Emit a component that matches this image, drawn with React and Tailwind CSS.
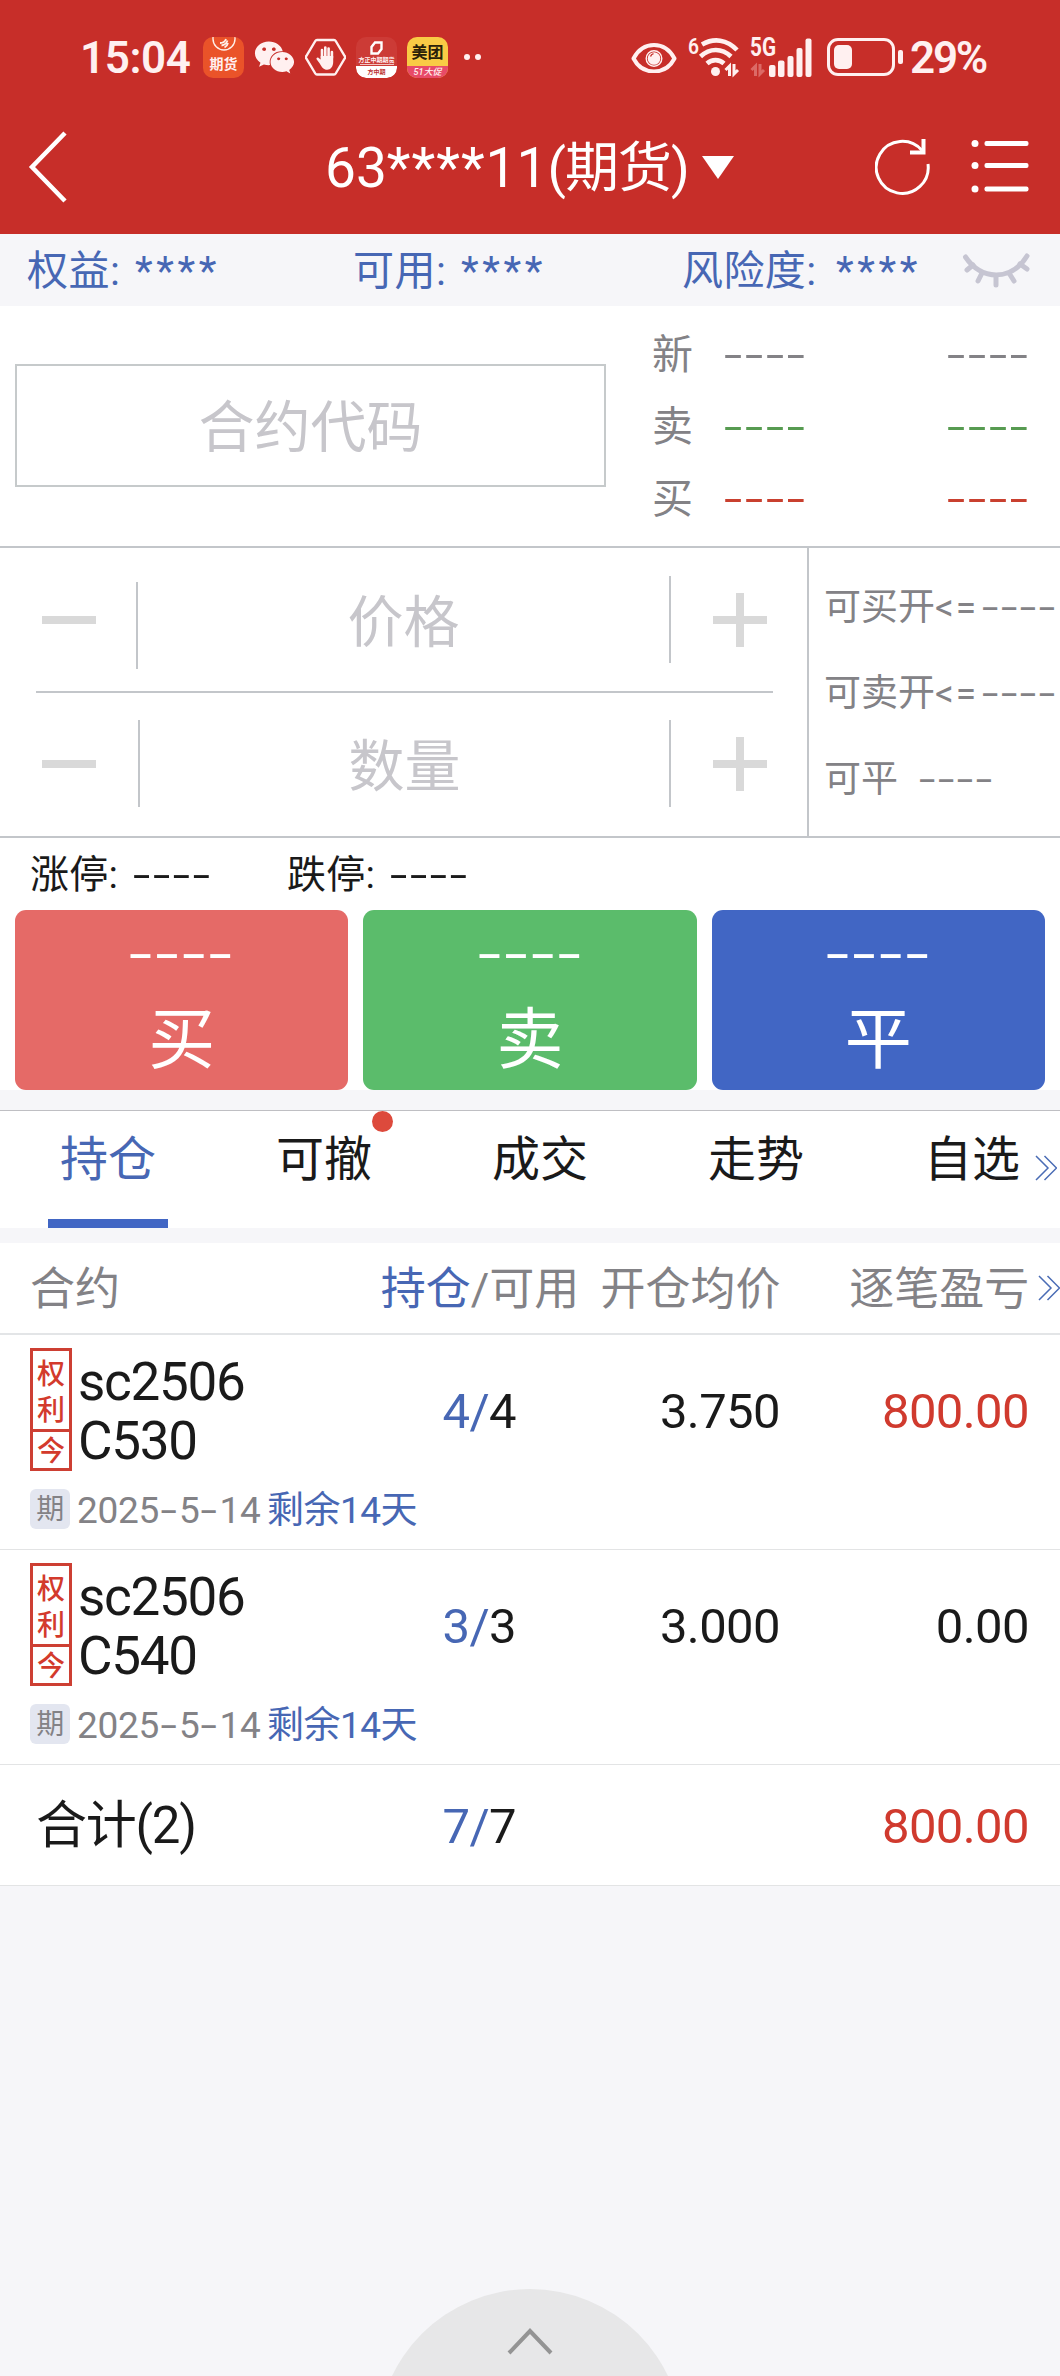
import { FaWeixin } from "react-icons/fa";

const TRADE_BUTTONS = [
  { label: "买", color: "bg-[#e56a67]" },
  { label: "卖", color: "bg-[#5bbc6b]" },
  { label: "平", color: "bg-[#4166c4]" },
];

const QUOTES = [
  { label: "新", color: "text-[#838286]" },
  { label: "卖", color: "text-[#579b51]" },
  { label: "买", color: "text-[#c9402f]" },
];

const TABS = [
  { label: "持仓", active: true },
  { label: "可撤", dot: true },
  { label: "成交" },
  { label: "走势" },
  { label: "自选" },
];

const POSITIONS = [
  { code: "sc2506", strike: "C530", held: 4, free: 4, price: "3.750", profit: "800.00", up: true },
  { code: "sc2506", strike: "C540", held: 3, free: 3, price: "3.000", profit: "0.00", up: false },
];

// Placeholder value, stretched so each hyphen is half an em wide
function Dashes({ className = "" }) {
  return (
    <span className={`inline-block w-[2.05em] ${className}`}>
      <span className="inline-block origin-left scale-x-[1.6] tracking-[0.043em]">----</span>
    </span>
  );
}

function Hyphen() {
  return (
    <span className="inline-block w-[20px]">
      <span className="inline-block origin-left scale-x-[1.6] pl-[1px]">-</span>
    </span>
  );
}

function DoubleChevron() {
  return (
    <svg width="22" height="26" viewBox="0 0 22 26" fill="none" stroke="#4a6cb5" strokeWidth="1.5">
      <path d="M1 1l12 12L1 25M9.500 1l12 12-12 12" />
    </svg>
  );
}

function PlusMark() {
  return (
    <svg width="54" height="54" viewBox="0 0 54 54" fill="#d9d9d9">
      <path d="M23 0h8v23h23v8H31v23h-8V31H0v-8h23z" />
    </svg>
  );
}

function StatusBar() {
  return (
    <div className="flex h-[114px] items-center pl-[80px] text-[#fff0f0]">
      <span className="w-[123px] pt-[2px] text-[44px] leading-none font-semibold tracking-[-0.400px]">15:04</span>

      <div className="flex items-center gap-[10px]">
        <div className="flex h-[41px] w-[41px] flex-col items-center overflow-hidden rounded-[10px] bg-[#ea5329]">
          <svg width="24" height="17" viewBox="0 0 24 17" fill="none" stroke="#fff0e8" strokeWidth="1.4">
            <path d="M1 0v2a11 11 0 0 0 22 0V0" />
            <path d="M8 6c3 0 5-1 6-4M9.500 8.500c3-.5 5-2 6-5M12.500 10.500c2-1 3-2.500 3.500-4.500" strokeWidth="1.800" />
          </svg>
          <span className="mt-[2px] text-[14px] leading-[16px] font-bold">期货</span>
        </div>
        <FaWeixin size={41} />
        <svg width="41" height="41" viewBox="0 0 41 41">
          <path
            d="M12 3h17a2 2 0 0 1 1.700 1l9 15a2 2 0 0 1 0 2.500l-9 15a2 2 0 0 1-1.700 1H12a2 2 0 0 1-1.700-1l-9-15a2 2 0 0 1 0-2.500l9-15A2 2 0 0 1 12 3z"
            fill="none"
            stroke="currentColor"
            strokeWidth="2.400"
          />
          <g stroke="currentColor" strokeWidth="2.600" strokeLinecap="round" fill="none">
            <path d="M17 21v-8M20.300 20v-9.500M23.600 20v-8.500M26.900 21v-6" />
          </g>
          <path
            d="M15.700 19h12.500v6c0 4.500-2.600 7.700-6 7.700-3.600 0-5.500-2.600-7.300-6l-3.300-4.500c-.6-1.300 1-2.200 2-1.200l2.100 1.600z"
            fill="currentColor"
          />
        </svg>
        <div className="flex h-[41px] w-[41px] flex-col items-center overflow-hidden rounded-[10px] bg-[#cc3b36] pt-[4px]">
          <svg width="13" height="14" viewBox="0 0 13 14" fill="none" stroke="#fff" strokeWidth="2.400">
            <path d="M5 1.500h6.500V8L8 12.500H1.500V6z" />
          </svg>
          <span className="mt-px text-[6px] leading-[8px] font-bold whitespace-nowrap">方正中期期货</span>
          <span className="mb-px h-px w-[34px] bg-[#f3c4c0]" />
          <span className="w-full flex-1 rounded-b-[10px] bg-white text-center text-[6px] leading-[11px] font-bold text-[#b33]">
            方中期
          </span>
        </div>
        <div className="flex h-[41px] w-[41px] flex-col items-center overflow-hidden rounded-[10px] bg-[#f9cb45]">
          <span className="h-[29px] text-[16px] leading-[32px] font-bold text-[#2a2108]">美团</span>
          <span className="w-full flex-1 bg-[#e84a68] text-center text-[9px] leading-[12px] font-medium italic">
            51大促
          </span>
        </div>
      </div>

      <div className="ml-[16px] flex gap-[5px]">
        <span className="h-[6px] w-[6px] rounded-full bg-current" />
        <span className="h-[6px] w-[6px] rounded-full bg-current" />
      </div>

      {/* Right side: eye comfort, wifi, signal, battery */}
      <svg className="ml-[150px] shrink-0" width="46" height="32" viewBox="0 0 46 32" fill="none" stroke="currentColor">
        <path
          d="M2.500 17.500C7 9 14 4 23 4s16 5 20.500 13.500C39 26 32 30.500 23 30.500S7 26 2.500 17.500z"
          strokeWidth="4"
          strokeLinejoin="round"
        />
        <circle cx="23" cy="17.500" r="7.800" strokeWidth="1.400" />
        <circle cx="23" cy="17.500" r="6.300" fill="currentColor" stroke="none" />
        <path d="M19.500 15.500a4.500 4.500 0 0 1 3-2.800" stroke="#c72e29" strokeWidth="1.400" />
      </svg>
      <svg
        className="ml-[11px] shrink-0 overflow-visible"
        width="53"
        height="42"
        viewBox="0 0 53 42"
        fill="none"
        stroke="currentColor"
      >
        <text x="0" y="17.500" fontSize="22" fontWeight="600" fill="currentColor" stroke="none" textLength="11" lengthAdjust="spacingAndGlyphs">
          6
        </text>
        <g strokeWidth="4.600">
          <path d="M14 8.500C26 1.500 39 3.500 49 14" />
          <path d="M12.500 20.500C22 11.500 34 12 43 20.500" />
          <path d="M19 27.500c5-4.500 12-4.500 17 0" />
        </g>
        <circle cx="27.500" cy="35.500" r="4.500" fill="currentColor" stroke="none" />
        <path d="M37.500 34l4-4v10M46 28v10l4-4" strokeWidth="3" />
      </svg>
      <svg className="ml-[9px] shrink-0 overflow-visible" width="62" height="42" viewBox="0 0 62 42" fill="currentColor">
        <text x="0" y="20" fontSize="25" fontWeight="700" textLength="26" lengthAdjust="spacingAndGlyphs">
          5G
        </text>
        <path d="M1.500 34l4-4v10M10 28v10l4-4" fill="none" stroke="#dc6a66" strokeWidth="3" />
        <rect x="19" y="29" width="6.500" height="12" rx="2" />
        <rect x="28" y="24.500" width="6.500" height="16.500" rx="2" />
        <rect x="37.500" y="20" width="6" height="21" rx="2" />
        <rect x="46.500" y="12" width="6" height="29" rx="2" />
        <rect x="55.500" y="2.500" width="6" height="38.500" rx="2" />
      </svg>
      <div className="ml-[15px] h-[38px] w-[68px] shrink-0 rounded-[11px] border-[3px] border-current p-[4px]">
        <div className="h-full w-[18px] rounded-[5px] bg-current" />
      </div>
      <span className="ml-[3px] h-[14px] w-[5px] shrink-0 rounded-[2px] bg-current" />
      <span className="ml-[7px] pt-[2px] text-[44px] leading-none font-semibold tracking-[-2.200px]">29%</span>
    </div>
  );
}

function TitleBar() {
  return (
    <div className="flex h-[106px] items-center text-white">
      <svg className="ml-[28px]" width="42" height="72" viewBox="0 0 42 72" fill="none" stroke="currentColor" strokeWidth="4.500">
        <path d="M37 2L4 36l33 34" />
      </svg>
      <div className="ml-[255px] flex w-[550px] items-center">
        <h1 className="w-[377px] pt-[2px] text-[55px] leading-none whitespace-nowrap">
          63<span className="tracking-[1px]">****</span>11<span className="text-[54px] tracking-[-1px]">(期货)</span>
        </h1>
        <svg width="32" height="23" viewBox="0 0 32 23" fill="currentColor">
          <path d="M0 0h32L16 23z" />
        </svg>
      </div>
      <svg width="56" height="58" viewBox="0 0 56 58" fill="none" stroke="currentColor" strokeWidth="3">
        <path d="M53 26A26 26 0 1 1 47 12.500" />
        <path d="M35 14.500h13.500V1" strokeWidth="4" />
      </svg>
      <svg className="ml-[40px]" width="58" height="54" viewBox="0 0 58 54" fill="currentColor">
        <circle cx="4" cy="3.500" r="3.500" />
        <circle cx="4" cy="25.500" r="3.500" />
        <circle cx="4" cy="49" r="3.500" />
        <rect x="13.500" y="1" width="44" height="5" rx="2" />
        <rect x="13.500" y="23" width="44" height="5" rx="2" />
        <rect x="13.500" y="46.500" width="44" height="5" rx="2" />
      </svg>
    </div>
  );
}

function AccountStrip() {
  return (
    <div className="flex h-[72px] items-center bg-[#f6f6f9] pt-[2px] text-[41px] leading-none whitespace-nowrap text-[#4767b4]">
      <div className="flex w-[326px] pl-[27px]">
        <span className="w-[108px] tracking-[0.500px]">权益:</span>
        <span className="tracking-[3.600px]">****</span>
      </div>
      <div className="flex w-[328px] pl-[27px]">
        <span className="w-[108px] tracking-[0.500px]">可用:</span>
        <span className="tracking-[3.600px]">****</span>
      </div>
      <div className="flex w-[308px] pl-[28px]">
        <span className="w-[154px] tracking-[0.400px]">风险度:</span>
        <span className="tracking-[3.600px]">****</span>
      </div>
      <svg width="68" height="36" viewBox="0 0 68 36" fill="none" stroke="#c6c5d2" strokeWidth="5" strokeLinecap="round">
        <path d="M3.500 4c16 24 46 24 61.500-1" />
        <path d="M11 12l-6 5M20 20l-4 8M34 23v9M47 20l5 8M58 11l7 5" />
      </svg>
    </div>
  );
}

function ContractSection() {
  return (
    <div className="flex h-[240px] items-center pl-[15px]">
      <div className="mb-px flex h-[123px] w-[591px] items-center justify-center border-2 border-[#c6cacb] pt-[4px] text-[56px] text-[#c7c6cb]">
        合约代码
      </div>
      <div className="flex flex-1 flex-col pt-[2px] pr-[32px] pl-[46px] text-[41px]">
        {QUOTES.map((q) => (
          <div key={q.label} className="flex h-[72px] items-center leading-none">
            <span className="w-[72px] text-[#838286]">{q.label}</span>
            <Dashes className={q.color} />
            <Dashes className={`ml-auto -mr-[3px] ${q.color}`} />
          </div>
        ))}
      </div>
    </div>
  );
}

function OrderForm() {
  return (
    <div className="flex h-[292px] border-y-2 border-[#c3c6ca]">
      <div className="w-[807px] pr-[34px] pl-[36px]">
        <div className="flex h-[143px] items-start">
          <div className="mt-[34px] flex h-[87px] w-[102px] border-r-2 border-[#c3c6ca] pt-[34px] pl-[6px]">
            <span className="h-[8px] w-[54px] bg-[#d9d9d9]" />
          </div>
          <span className="mt-[47px] flex-1 text-center text-[56px] leading-[56px] text-[#c7c6cb]">价格</span>
          <div className="mt-[28px] flex h-[87px] w-[104px] border-l-2 border-[#c3c6ca] pt-[17px] pl-[42px]">
            <PlusMark />
          </div>
        </div>
        <div className="h-[2px] bg-[#c3c6ca]" />
        <div className="flex h-[143px] items-start">
          <div className="mt-[27px] flex h-[87px] w-[104px] border-r-2 border-[#c3c6ca] pt-[40px] pl-[6px]">
            <span className="h-[8px] w-[54px] bg-[#d9d9d9]" />
          </div>
          <span className="mt-[46px] flex-1 text-center text-[56px] leading-[56px] text-[#c7c6cb]">数量</span>
          <div className="mt-[27px] flex h-[87px] w-[104px] border-l-2 border-[#c3c6ca] pt-[17px] pl-[42px]">
            <PlusMark />
          </div>
        </div>
      </div>
      <div className="flex flex-1 flex-col border-l-2 border-[#c3c6ca] pt-[16px] pl-[15px] text-[37px] leading-none whitespace-nowrap text-[#838286]">
        <div className="flex h-[86px] items-center">
          <span className="w-[158px]">
            可买开<span className="tracking-[2px]">&lt;=</span>
          </span>
          <Dashes />
        </div>
        <div className="flex h-[86px] items-center">
          <span className="w-[158px]">
            可卖开<span className="tracking-[2px]">&lt;=</span>
          </span>
          <Dashes />
        </div>
        <div className="flex h-[86px] items-center">
          <span className="w-[95px]">可平</span>
          <Dashes />
        </div>
      </div>
    </div>
  );
}

function TradeButtons() {
  return (
    <div>
      <div className="flex h-[72px] items-center pt-[2px] pl-[30px] text-[39px] leading-none text-[#1a1a1a]">
        <span className="w-[103px] tracking-[0.300px]">涨停:</span>
        <Dashes />
        <span className="ml-[74px] w-[103px] tracking-[0.300px]">跌停:</span>
        <Dashes />
      </div>
      <div className="grid grid-cols-3 gap-[15px] px-[15px]">
        {TRADE_BUTTONS.map((b) => (
          <button
            key={b.label}
            className={`flex h-[180px] flex-col items-center rounded-[11px] text-white ${b.color}`}
          >
            <Dashes className="mt-[17px] ml-[2px] text-left text-[52px] leading-[56px]" />
            <span className="mt-[24px] text-[67px] leading-[67px]">{b.label}</span>
          </button>
        ))}
      </div>
    </div>
  );
}

function TabBar() {
  return (
    <div className="mt-[20px] flex h-[118px] border-t border-[#bfbfc3] bg-white">
      {TABS.map((tab) => (
        <div
          key={tab.label}
          className={`relative flex w-[216px] shrink-0 flex-col items-center text-[48px] leading-[97px] ${
            tab.active ? "text-[#4767b4]" : "text-[#1a1a1a]"
          }`}
        >
          <span>{tab.label}</span>
          {tab.active && <span className="mt-auto h-[9px] w-[120px] bg-[#4166c4]" />}
          {tab.dot && (
            <span className="absolute top-0 left-[156px] h-[21px] w-[21px] rounded-full bg-[#dd4a3c]" />
          )}
        </div>
      ))}
      <div className="-ml-[45px] shrink-0 pt-[44px]">
        <DoubleChevron />
      </div>
    </div>
  );
}

function Ratio({ held, free }) {
  return (
    <span className="w-[244px] text-right">
      <span className="text-[#4767b4]">{held}/</span>
      {free}
    </span>
  );
}

function PositionRow({ item }) {
  return (
    <div className="h-[215px] border-b border-[#e3e4e5] pt-[13px] pl-[30px]">
      <div className="flex h-[123px]">
        <div className="flex w-[42px] shrink-0 flex-col border-[3px] border-[#cd3f33] text-center text-[28px] font-medium text-[#d33a2c]">
          <span className="h-[78px] pt-[6px] leading-[36px]">
            权
            <br />利
          </span>
          <span className="flex-1 border-t-[3px] border-[#cd3f33] leading-[40px]">今</span>
        </div>
        <div className="w-[200px] pt-[5px] pl-[6px] text-[53px] leading-[59px] tracking-[-1.300px]">
          {item.code}
          <br />
          {item.strike}
        </div>
        <div className="flex flex-1 pt-[34px] text-[49px] leading-[60px] tracking-[-0.600px]">
          <Ratio held={item.held} free={item.free} />
          <span className="w-[264px] text-right">{item.price}</span>
          <span className={`w-[249px] text-right ${item.up ? "text-[#d03a2e]" : ""}`}>{item.profit}</span>
        </div>
      </div>
      <div className="mt-[18px] flex h-[40px] items-center text-[37px] leading-none tracking-[-0.300px]">
        <span className="h-[40px] w-[40px] rounded-[6px] bg-[#e3e6f0] text-center text-[28px] leading-[41px] text-[#838286]">
          期
        </span>
        <span className="w-[197px] pt-[2px] pl-[7px] text-[#838286]">
          2025<Hyphen />5<Hyphen />14
        </span>
        <span className="pt-[2px] tracking-[-0.500px] text-[#4767b4]">剩余14天</span>
      </div>
    </div>
  );
}

function PositionTable() {
  return (
    <div className="mt-[15px] bg-white text-[#1a1a1a]">
      <div className="flex h-[92px] items-center border-b-2 border-[#e3e5e7] pl-[30px] text-[45px] leading-none whitespace-nowrap text-[#838286]">
        <span className="w-[351px] pt-[2px]">合约</span>
        <span className="w-[220px] pt-[2px]">
          <span className="text-[#4767b4]">持仓</span>/可用
        </span>
        <span className="w-[249px] pt-[2px]">开仓均价</span>
        <span className="w-[189px] pt-[2px]">逐笔盈亏</span>
        <DoubleChevron />
      </div>
      {POSITIONS.map((item) => (
        <PositionRow key={item.strike} item={item} />
      ))}
      <div className="flex h-[121px] items-center border-b border-[#e3e4e5] pt-[3px] pl-[36px] text-[49px] tracking-[-0.600px]">
        <span className="w-[236px] text-[51px] tracking-[-1.200px]">合计(2)</span>
        <Ratio held={7} free={7} />
        <span className="w-[513px] text-right text-[#d03a2e]">800.00</span>
      </div>
    </div>
  );
}

export default function App() {
  return (
    <div className="flex h-[2376px] w-[1060px] flex-col overflow-hidden bg-[#f6f6f9] font-[Roboto,'Noto_Sans_CJK_SC',sans-serif]">
      <header className="h-[234px] shrink-0 bg-[#c72e29]">
        <StatusBar />
        <TitleBar />
      </header>
      <AccountStrip />
      <div className="bg-white">
        <ContractSection />
        <OrderForm />
        <TradeButtons />
      </div>
      <TabBar />
      <PositionTable />

      {/* Pull-up handle, cut off by the bottom of the screen */}
      <div className="mt-auto flex h-[87px] justify-center overflow-hidden">
        <div className="flex h-[306px] w-[306px] shrink-0 justify-center rounded-full bg-[#e7e7e8] pt-[38px]">
          <svg width="46" height="28" viewBox="0 0 46 28" fill="none" stroke="#949494" strokeWidth="4">
            <path d="M2 26L23 4l21 22" />
          </svg>
        </div>
      </div>
    </div>
  );
}
